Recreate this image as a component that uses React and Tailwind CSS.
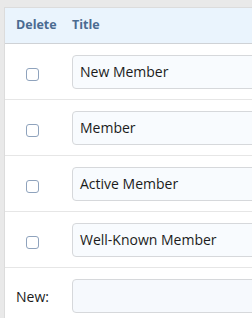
const titles = ["New Member", "Member", "Active Member", "Well-Known Member"];

function Check() {
  return <span className="block w-[13px] h-[13px] mt-[5px] rounded-[3px] border border-[#8fa3bd] bg-white" />;
}

export default function App() {
  return (
    <div className="w-[252px] h-[318px] overflow-hidden bg-[#e9e9e9] pt-[7px] pl-[4px] font-['Open_Sans',sans-serif]">
      <div className="w-[400px] bg-white border-l border-t border-[#dcdcdc]">
        <div className="flex h-[36px] items-center bg-[#eaf4fd] border-b border-[#cfd2d6] text-[12.5px] font-bold text-[#4a6b91]">
          <div className="w-[55px] pl-[11px]">Delete</div>
          <div className="pl-[12px]">Title</div>
        </div>
        {titles.map((t) => (
          <div key={t} className="flex h-[56px] items-center border-b border-[#e6e6e6]">
            <div className="w-[55px] flex justify-center">
              <Check />
            </div>
            <div className="pl-[12px] flex-1">
              <div className="h-[34px] rounded-[4px] border border-[#d6d8db] bg-[#f8fbfe] pl-[7px] flex items-center text-[14px] text-[#1b1b1b]">
                {t}
              </div>
            </div>
          </div>
        ))}
        <div className="flex h-[56px] items-center">
          <div className="w-[55px] pl-[11px] text-[14px] text-[#1b1b1b]">New:</div>
          <div className="pl-[12px] flex-1">
            <div className="h-[34px] rounded-[4px] border border-[#d6d8db] bg-[#f6f9fd]" />
          </div>
        </div>
      </div>
    </div>
  );
}
